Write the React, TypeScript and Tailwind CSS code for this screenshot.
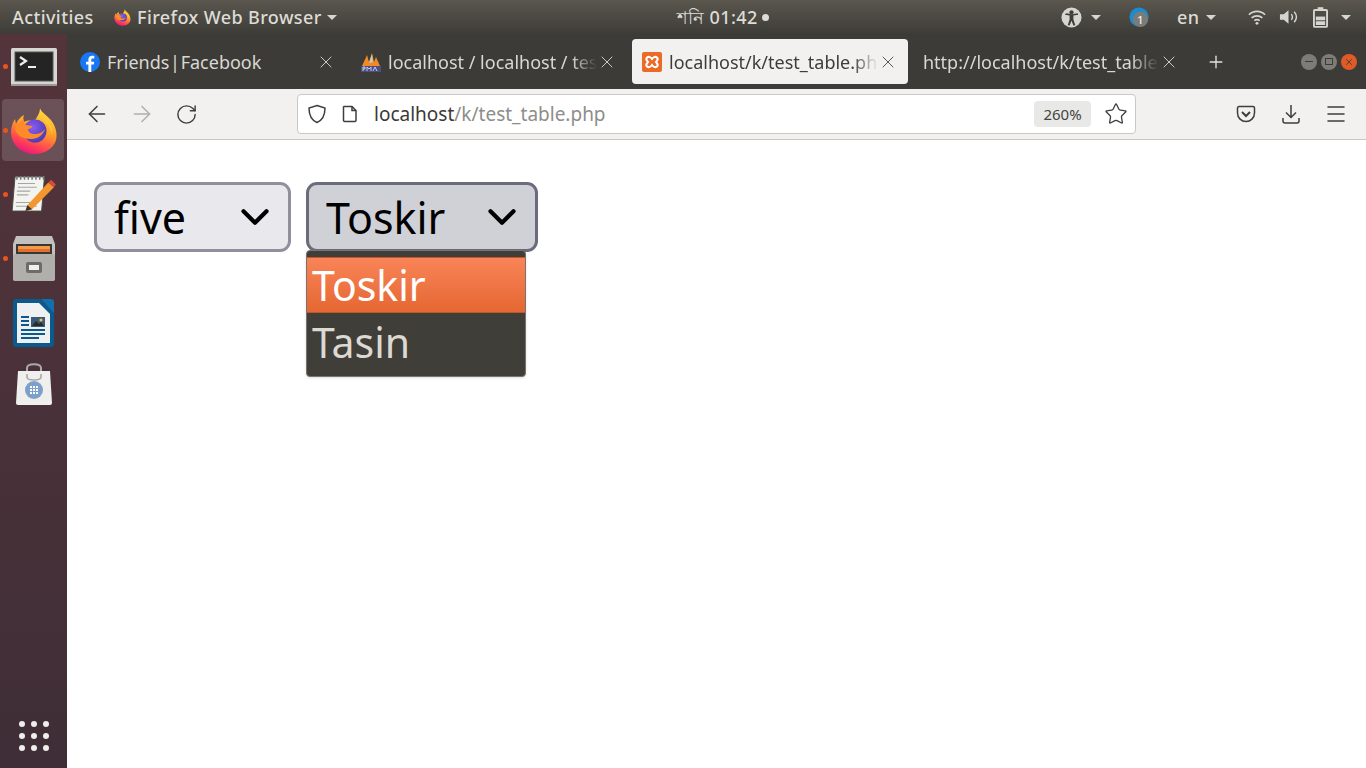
import React from "react";
import { X, Plus, ChevronDown, ArrowLeft, ArrowRight, RotateCw, Star, Menu } from "lucide-react";

const uiFont = "font-['Noto_Sans','Open_Sans',sans-serif]";

const FirefoxIcon = ({ size, id }: { size: number; id: string }) => (
  <svg width={size} height={size} viewBox="0 0 48 48">
    <defs>
      <linearGradient id={`${id}a`} x1="0.7" y1="0" x2="0.3" y2="1">
        <stop offset="0" stopColor="#ffe23a" />
        <stop offset="0.45" stopColor="#ff9a2a" />
        <stop offset="0.8" stopColor="#ff3b58" />
        <stop offset="1" stopColor="#e31587" />
      </linearGradient>
      <radialGradient id={`${id}b`} cx="0.4" cy="0.35" r="0.7">
        <stop offset="0" stopColor="#8a5cf0" />
        <stop offset="1" stopColor="#4a3ab0" />
      </radialGradient>
    </defs>
    <path d="M30 1c1 5 9 8 13 15 4 7 4 13 3 17-2 8-11 14-22 14C11 47 1 37 1 25c0-5 2-10 4-13l1 5c1-3 4-7 8-9-1 3-1 5 0 7 3-2 8-2 10 0 2-4 6-8 6-14z" fill={`url(#${id}a)`} />
    <circle cx="25" cy="24" r="11.500" fill={`url(#${id}b)`} />
    <path d="M5 21c2-4 6-7 9-9-1 3 0 5 2 6l6 1c1 1-2 3-4 3 0 3 3 5 7 5 4 0 8-2 10-5-2 6-7 10-14 10C12 32 6 28 5 21z" fill="#ff8a2a" />
    <path d="M38 14c3 4 5 9 4 14-1-6-3-10-7-13-1-3-3-4-3-8 3 1 5 4 6 7z" fill="#ffc93a" />
  </svg>
);

const TerminalIcon = () => (
  <svg width="46" height="38" viewBox="0 0 46 38">
    <rect x="0" y="0" width="46" height="38" rx="1.5" fill="#d6d6d3" />
    <rect x="0" y="36" width="46" height="2" fill="#9a9a97" />
    <rect x="4" y="4" width="38" height="29" fill="#242424" stroke="#555" strokeWidth="1" />
    <path d="M9 9l6 4-6 4" fill="none" stroke="#eee" strokeWidth="2.2" />
    <rect x="17" y="18" width="8" height="2" fill="#eee" />
  </svg>
);

const NotepadIcon = () => (
  <svg width="44" height="38" viewBox="0 0 46 40" className="-mt-[5px]">
    <path d="M3 3h31l-3 36H0z" fill="#f3f3f0" stroke="#4a4a48" strokeWidth="1" />
    <path d="M5 2v4M9 2v4M13 2v4M17 2v4M21 2v4M25 2v4M29 2v4M33 2v4" stroke="#777" strokeWidth="1.6" />
    <path d="M6 10h18M6 14h20M5 18h14M5 22h12M4 30h16M4 34h22" stroke="#a6a6a2" strokeWidth="1.2" />
    <path d="M16 33l22-24 6 5-23 23-7 2z" fill="#f2962e" />
    <path d="M38 9l3-3 5 5-2 3z" fill="#d84a3a" />
    <path d="M16 33l5 4-7 2z" fill="#333" />
  </svg>
);

const CabinetIcon = () => (
  <svg width="42" height="46" viewBox="0 0 42 46">
    <path d="M3 0h36l3 8v34a3 3 0 0 1-3 3H3a3 3 0 0 1-3-3V8z" fill="#c2c1bd" />
    <rect x="3" y="8" width="36" height="11" fill="#3a3834" />
    <rect x="5" y="10" width="32" height="5" fill="#f09a4a" />
    <rect x="5" y="13" width="32" height="3" fill="#e36f2e" />
    <rect x="0" y="18" width="42" height="27" rx="2" fill="#b0afab" />
    <rect x="13" y="26" width="16" height="11" rx="2" fill="#6d6c68" />
    <rect x="16" y="29" width="10" height="5" fill="#f1f1ee" />
  </svg>
);

const WriterIcon = () => (
  <svg width="41" height="48" viewBox="0 0 41 48">
    <path d="M3 0h24l14 13v32a3 3 0 0 1-3 3H3a3 3 0 0 1-3-3V3a3 3 0 0 1 3-3z" fill="#0b5a8e" />
    <path d="M28 0h10a3 3 0 0 1 3 3v11z" fill="#1170ab" />
    <path d="M4 4h22l11 11v29H4z" fill="#eef0f1" />
    <path d="M8 18h8M8 22h8M8 26h8M8 31h24M8 35h24M8 39h18" stroke="#0b5a8e" strokeWidth="2" />
    <rect x="18" y="18" width="14" height="10" fill="#3a5a78" />
    <path d="M19 27l4-5 3 3 2-2 3 4z" fill="#2b2b2b" />
    <circle cx="28" cy="21" r="1.6" fill="#f2c53d" />
  </svg>
);

const BagIcon = () => (
  <svg width="36" height="42" viewBox="0 0 36 42" className="-mt-[6px]">
    <path d="M11 8V5c0-5 14-5 14 0v3" fill="none" stroke="#a9a9a6" strokeWidth="2" />
    <path d="M2 8h32l2 32a2 2 0 0 1-2 2H2a2 2 0 0 1-2-2z" fill="#eff0ee" />
    <path d="M11 11v3c0 4 14 4 14 0v-3" fill="none" stroke="#a9a9a6" strokeWidth="1.6" />
    <circle cx="18" cy="27" r="9" fill="#7c9fcb" />
    <path d="M14 23h2v2h-2zM17 23h2v2h-2zM20 23h2v2h-2zM14 26h2v2h-2zM17 26h2v2h-2zM20 26h2v2h-2zM14 29h2v2h-2zM17 29h2v2h-2zM20 29h2v2h-2z" fill="#fff" />
  </svg>
);

const FacebookIcon = () => (
  <svg width="20" height="20" viewBox="0 0 20 20">
    <circle cx="10" cy="10" r="10" fill="#1877f2" />
    <path d="M11.3 20v-7.4h2.5l.4-2.9h-2.9V7.9c0-.9.3-1.4 1.4-1.4h1.6V3.9c-.8-.1-1.5-.2-2.2-.2-2.3 0-3.7 1.3-3.7 3.800v2.200H6v2.900h2.400V20z" fill="#fff" />
  </svg>
);

const PmaIcon = () => (
  <svg width="20" height="20" viewBox="0 0 20 20">
    <path d="M1 14L6 3l2 7 3-9 2 9 2-5 4 9z" fill="#f08a24" />
    <path d="M8 11l3-9 1 8z" fill="#c9c9c4" />
    <rect x="0" y="14" width="20" height="6" fill="#4a4f80" />
    <path d="M2 19v-4h2v2H2M6 19v-4l2 2 2-2v4M12 19l2-4 2 4" fill="none" stroke="#c7cbe6" strokeWidth="1" />
  </svg>
);

const XamppIcon = () => (
  <svg width="20" height="20" viewBox="0 0 20 20">
    <rect width="20" height="20" rx="2" fill="#ea6a26" />
    <path d="M5 5.5c2-1.5 4 0 5 1.5 1-1.5 3-3 5-1.5 1.500 1.500.5 3-1 4.500 1.500 1.500 2.500 3 1 4.500-2 1.500-4 0-5-1.500-1 1.500-3 3-5 1.500-1.500-1.500-.5-3 1-4.500-1.500-1.500-2.500-3-1-4.500z" fill="none" stroke="#fff" strokeWidth="2" />
  </svg>
);

const Caret = ({ className = "" }: { className?: string }) => (
  <span className={`block shrink-0 w-0 h-0 border-x-[5px] border-x-transparent border-t-[5px] border-t-[#d6d5d0] ${className}`} />
);

const DockItem = ({ dot, active, children }: { dot?: boolean; active?: boolean; children: React.ReactNode }) => (
  <div className="relative w-full h-[64px] flex items-center justify-center">
    {active && <div className="absolute left-[2px] right-[3px] top-0 bottom-[2px] rounded bg-white/15" />}
    {dot && <span className="absolute left-[3px] top-[29px] w-[5px] h-[5px] rounded-full bg-[#e9541f]" />}
    <div className="relative flex">{children}</div>
  </div>
);

const Tab = ({ icon, title, active, fade, titleClass = "" }: { icon?: React.ReactNode; title: string; active?: boolean; fade?: boolean; titleClass?: string }) => (
  <div className={`w-[276px] h-[45px] rounded px-[10px] flex items-center ${active ? "bg-[#f2f1f0] text-[#3d3c38]" : "text-[#d9d8d3]"}`}>
    {icon && <span className="w-[20px] mr-[7px] shrink-0 flex">{icon}</span>}
    <span className={`flex-1 min-w-0 pt-px overflow-hidden whitespace-nowrap text-[18px] ${titleClass} ${fade ? "[mask-image:linear-gradient(to_right,black_88%,transparent)]" : ""}`}>{title}</span>
    <X size={20} strokeWidth={1.1} className={`shrink-0 ${active ? "text-[#4a4945]" : "text-[#d9d8d3]"}`} />
  </div>
);

const SelectBox = ({ label, open }: { label: string; open?: boolean }) => (
  <div className={`h-[70px] rounded-[11px] border-[3px] flex items-center justify-between pl-[17px] pr-[10px] text-black text-[43px] ${open ? "w-[232px] bg-[#d0d0d7] border-[#6b6b7b]" : "w-[197px] bg-[#e9e9ed] border-[#8f8f9d]"}`}>
    <span className="leading-none">{label}</span>
    <ChevronDown size={46} strokeWidth={2.2} />
  </div>
);

export default function App() {
  return (
    <div className={`w-[1366px] h-[768px] overflow-hidden flex flex-col bg-white ${uiFont}`}>
      <div className="h-[34px] shrink-0 bg-gradient-to-b from-[#5b574f] to-[#3d3c37] flex items-center text-[#dedcd6] text-[18px] font-medium tracking-[0.4px]">
        <span className="ml-[12px] w-[102px] whitespace-nowrap">Activities</span>
        <FirefoxIcon size={17} id="top" />
        <span className="ml-[6px] whitespace-nowrap">Firefox Web Browser</span>
        <Caret className="ml-[5px]" />
        <span className="ml-[340px] flex items-center gap-[4px] whitespace-nowrap">
          শনি 01:42
          <span className="w-[7px] h-[7px] rounded-full bg-[#dedcd6]" />
        </span>
        <span className="ml-auto flex items-center">
          <svg width="21" height="21" viewBox="0 0 22 22">
            <circle cx="11" cy="11" r="10.500" fill="#d6d5d0" />
            <circle cx="11" cy="5.500" r="2.200" fill="#3f3e39" />
            <path d="M4 8l5 1v4l-2 6 2 .5 2-5 2 5 2-.5-2-6V9l5-1-.5-1.500-6 1.200-6-1.200z" fill="#3f3e39" />
          </svg>
          <Caret className="ml-[9px]" />
          <svg className="ml-[28px]" width="21" height="21" viewBox="0 0 22 22">
            <circle cx="10.500" cy="10.500" r="10" fill="#1d8ccd" />
            <circle cx="12" cy="13" r="8" fill="#7b7b78" />
            <text x="12" y="18" textAnchor="middle" fontSize="12" fill="#eee">1</text>
          </svg>
          <span className="ml-[27px] w-[20px]">en</span>
          <Caret className="ml-[9px]" />
          <svg className="ml-[32px]" width="18" height="17" viewBox="0 0 20 18" fill="none" stroke="#d6d5d0" strokeWidth="1.800">
            <path d="M1 6c5-5 13-5 18 0M4 9.500c3.500-3 8.500-3 12 0M7 12.500c2-1.500 4-1.500 6 0" />
            <circle cx="10" cy="15.500" r="1.600" fill="#d6d5d0" stroke="none" />
          </svg>
          <svg className="ml-[13px]" width="19" height="18" viewBox="0 0 20 18" fill="none" stroke="#d6d5d0" strokeWidth="1.500">
            <path d="M1 6h4l5-4v14l-5-4H1z" fill="#d6d5d0" stroke="none" />
            <path d="M13 6c1.500 2 1.500 4 0 6M16 3.500c3 3.500 3 7.500 0 11" />
          </svg>
          <svg className="ml-[15px]" width="15" height="21" viewBox="0 0 16 22">
            <rect x="5" y="0" width="6" height="3" fill="#d6d5d0" />
            <rect x="1" y="3" width="14" height="18" rx="1" fill="none" stroke="#d6d5d0" strokeWidth="2" />
            <rect x="3" y="10" width="10" height="4" fill="#d6d5d0" />
            <rect x="3" y="15" width="10" height="4" fill="#d6d5d0" />
          </svg>
          <Caret className="ml-[13px] mr-[15px]" />
        </span>
      </div>

      <div className="flex-1 min-h-0 flex">
        <div className="w-[67px] shrink-0 bg-gradient-to-b from-[#54343b] to-[#3f2e37] flex flex-col pt-px">
          <DockItem dot><TerminalIcon /></DockItem>
          <DockItem dot active><FirefoxIcon size={48} id="dock" /></DockItem>
          <DockItem dot><NotepadIcon /></DockItem>
          <DockItem dot><CabinetIcon /></DockItem>
          <DockItem><WriterIcon /></DockItem>
          <DockItem><BagIcon /></DockItem>
          <div className="mt-auto mb-[17px] mx-auto grid grid-cols-3 gap-[6px]">
            {Array.from({ length: 9 }).map((_, i) => (
              <span key={i} className="w-[6px] h-[6px] rounded-full bg-[#efeeec]" />
            ))}
          </div>
        </div>

        <div className="flex-1 min-w-0 flex flex-col">
          <div className="h-[55px] shrink-0 bg-[#3c3b37] flex items-start pt-[5px] pl-[3px] gap-[5px]">
            <Tab icon={<FacebookIcon />} title="Friends | Facebook" titleClass="[word-spacing:-4px]" />
            <Tab icon={<PmaIcon />} title="localhost / localhost / test_table" fade />
            <Tab icon={<XamppIcon />} title="localhost/k/test_table.php" active fade />
            <Tab title="http://localhost/k/test_table.php" fade />
            <div className="ml-[12px] h-[45px] flex items-center text-[#e4e3de]">
              <Plus size={20} strokeWidth={1.6} />
            </div>
            <div className="ml-auto mr-[9px] h-[45px] flex items-center gap-[4px]">
              <span className="w-[16px] h-[16px] rounded-full bg-[#7d7c76] flex items-center justify-center">
                <span className="w-[8px] h-[1.500px] bg-[#3c3b37]" />
              </span>
              <span className="w-[16px] h-[16px] rounded-full bg-[#7d7c76] flex items-center justify-center">
                <span className="w-[8px] h-[7px] border border-[#3c3b37]" />
              </span>
              <span className="w-[16px] h-[16px] rounded-full bg-[#e05a28] flex items-center justify-center">
                <X size={10} strokeWidth={2} className="text-[#3c3b37]" />
              </span>
            </div>
          </div>

          <div className="h-[51px] shrink-0 bg-[#f2f1f0] border-b border-[#c9c8c4] flex items-center text-[#3f3e3a]">
            <ArrowLeft size={26} strokeWidth={1.400} className="ml-[17px]" />
            <ArrowRight size={26} strokeWidth={1.400} className="ml-[19px] text-[#b0afab]" />
            <RotateCw size={23} strokeWidth={1.500} className="ml-[20px]" />
            <div className="ml-[99px] w-[839px] h-[40px] bg-white border border-[#c9c8c4] rounded flex items-center">
              <svg className="ml-[9px]" width="20" height="20" viewBox="0 0 20 20" fill="none" stroke="#3f3e3a" strokeWidth="1.500">
                <path d="M10 1.500l8 2.500c0 7-2 12-8 14.500C4 16 2 11 2 4z" />
              </svg>
              <svg className="ml-[15px]" width="16" height="18" viewBox="0 0 16 18" fill="none" stroke="#3f3e3a" strokeWidth="1.500">
                <path d="M2 1.500h8l4 4v10a1.500 1.500 0 0 1-1.500 1H3a1.500 1.500 0 0 1-1.500-1V2z" />
                <path d="M10 1.500v4h4" />
              </svg>
              <span className="ml-[16px] text-[19px] text-[#3a3935]">localhost<span className="text-[#8e8d89]">/k/test_table.php</span></span>
              <span className="ml-auto w-[57px] h-[26px] rounded bg-[#e8e8e6] flex items-center justify-center text-[15px] text-[#45443f]">260%</span>
              <Star size={24} strokeWidth={1.300} className="ml-[13px] mr-[7px]" />
            </div>
            <svg className="ml-[100px]" width="20" height="18" viewBox="0 0 20 18" fill="none" stroke="#3f3e3a" strokeWidth="1.500">
              <path d="M3 1.500h14a1.500 1.500 0 0 1 1.500 1.500v5c0 5-4 8.500-8.500 8.500S1.500 13 1.500 8V3A1.500 1.500 0 0 1 3 1.500z" />
              <path d="M6 7l4 4 4-4" strokeWidth="2" />
            </svg>
            <svg className="ml-[26px]" width="18" height="20" viewBox="0 0 18 20" fill="none" stroke="#3f3e3a" strokeWidth="1.500">
              <path d="M9 1v12M4 8.500l5 5 5-5M1 14v3a2 2 0 0 0 2 2h12a2 2 0 0 0 2-2v-3" />
            </svg>
            <Menu size={24} strokeWidth={1.500} className="ml-[24px]" />
          </div>

          <div className="flex-1 bg-white pt-[42px] pl-[27px] flex items-start gap-[15px]">
            <SelectBox label="five" />
            <div className="relative">
              <SelectBox label="Toskir" open />
              <div className="absolute left-0 top-[68px] w-[220px] h-[127px] bg-[#403e39] rounded border border-[#77756f] pt-[6px] text-[41px] leading-[55px] shadow-sm">
                <div className="h-[56px] px-[5px] text-white bg-gradient-to-b from-[#f98457] to-[#e56732] border-y border-[#c2552a]">Toskir</div>
                <div className="h-[56px] px-[5px] pt-[2px] text-[#dcd9d2]">Tasin</div>
              </div>
            </div>
          </div>
        </div>
      </div>
    </div>
  );
}
